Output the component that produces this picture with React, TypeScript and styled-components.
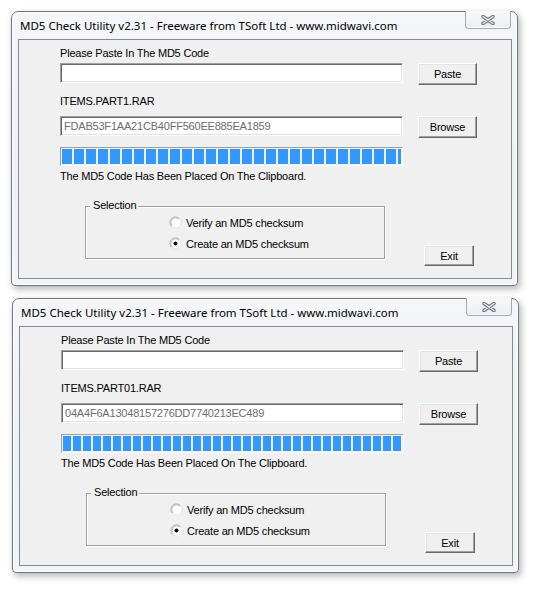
import React from "react";
import styled, { createGlobalStyle } from "styled-components";

const GlobalStyle = createGlobalStyle`
  html, body { margin: 0; padding: 0; background: #ffffff; }
  body { font-family: "Liberation Sans", Arial, sans-serif; }
  * { box-sizing: border-box; }
`;

const Page = styled.div`
  width: 536px;
  height: 595px;
  padding: 11px 0 0 11px;
  display: flex;
  flex-direction: column;
  align-items: flex-start;
  gap: 12px;
`;

const Frame = styled.div<{ $shift: number }>`
  width: 507px;
  height: 275px;
  margin-left: ${(p) => p.$shift}px;
  display: flex;
  flex-direction: column;
  border: 1px solid #70767c;
  border-radius: 7px 7px 4px 4px;
  background: linear-gradient(180deg, #f4f6f9 0%, #eef1f5 60%, #f2f5f8 100%);
  box-shadow: inset 0 0 0 1px rgba(255, 255, 255, 0.9), 2px 3px 7px rgba(0, 0, 0, 0.3);
  padding: 0 5px 6px 6px;
`;

const TitleBar = styled.div`
  height: 27px;
  display: flex;
  align-items: center;
  justify-content: space-between;
  flex-shrink: 0;
`;

const TitleText = styled.span`
  padding-left: 2px;
  font-family: "Noto Sans", "Open Sans", sans-serif;
  font-size: 11.5px;
  color: #000;
  white-space: nowrap;
`;

const CloseButton = styled.div`
  align-self: flex-start;
  margin-top: -1px;
  margin-right: 1px;
  width: 46px;
  height: 18px;
  border: 1px solid #a3a8ae;
  border-top: none;
  border-radius: 0 0 4px 4px;
  background: linear-gradient(180deg, #f7f8fa 0%, #eceef1 100%);
  box-shadow: inset 0 -1px 0 rgba(255, 255, 255, 0.8);
  display: flex;
  align-items: center;
  justify-content: center;
`;

const Client = styled.div`
  flex: 1;
  background: #f0f0f0;
  border: 1px solid #868b91;
  padding: 7px 0 0 41px;
  display: flex;
  flex-direction: column;
  align-items: flex-start;
  font-size: 11px;
  letter-spacing: -0.2px;
  color: #000;
`;

const Label = styled.div<{ $top: number }>`
  margin-top: ${(p) => p.$top}px;
  height: 13px;
  line-height: 13px;
  white-space: nowrap;
`;

const InputRow = styled.div<{ $top: number }>`
  margin-top: ${(p) => p.$top}px;
  display: grid;
  grid-template-columns: 343px 59px;
  column-gap: 15px;
  align-items: start;
`;

const Field = styled.div<{ $muted?: boolean }>`
  height: 20px;
  background: #fff;
  border: 1px solid;
  border-color: #a0a0a0 #ffffff #ffffff #a0a0a0;
  box-shadow: inset 1px 1px 0 #696969, inset -1px -1px 0 #e3e3e3;
  padding: 0 3px;
  line-height: 18px;
  color: ${(p) => (p.$muted ? "#6d6d6d" : "#000")};
  white-space: nowrap;
  overflow: hidden;
`;

const Button = styled.div<{ $w: number; $h: number }>`
  width: ${(p) => p.$w}px;
  height: ${(p) => p.$h}px;
  background: #f0f0f0;
  border: 1px solid;
  border-color: #ffffff #696969 #696969 #ffffff;
  box-shadow: inset -1px -1px 0 #a0a0a0, inset 1px 1px 0 #e3e3e3;
  display: flex;
  align-items: center;
  justify-content: center;
  font-size: 11px;
  color: #000;
`;

const Progress = styled.div`
  margin-top: 9px;
  width: 343px;
  height: 19px;
  border: 1px solid;
  border-color: #a0a0a0 #ffffff #ffffff #a0a0a0;
  padding: 1px;
  display: flex;
`;

const ProgressFill = styled.div<{ $block: number; $gap: number }>`
  flex: 1;
  background: repeating-linear-gradient(
    to right,
    #3399ff 0,
    #3399ff ${(p) => p.$block}px,
    transparent ${(p) => p.$block}px,
    transparent ${(p) => p.$block + p.$gap}px
  );
`;

const BottomRow = styled.div`
  margin-top: 23px;
  display: flex;
  align-items: flex-start;
`;

const GroupBox = styled.div`
  position: relative;
  margin-left: 25px;
  width: 300px;
  height: 53px;
  border: 1px solid #a0a0a0;
  box-shadow: inset 1px 1px 0 #ffffff, 1px 1px 0 #ffffff;
  padding: 5px 0 0 83px;
  display: flex;
  flex-direction: column;
`;

const Legend = styled.span`
  position: absolute;
  top: -8px;
  left: 4px;
  padding: 0 2px 0 3px;
  line-height: 13px;
  background: #f0f0f0;
`;

const RadioRow = styled.div`
  height: 21px;
  display: flex;
  align-items: center;
  gap: 4px;
  white-space: nowrap;
`;

const ExitWrap = styled.div`
  margin-left: 39px;
  margin-top: 39px;
`;

const Radio: React.FC<{ checked?: boolean }> = ({ checked }) => (
  <svg width="13" height="13" viewBox="0 0 13 13">
    <circle cx="6.5" cy="6.5" r="5.5" fill="#ffffff" />
    <path d="M2.6 10.4 A5.5 5.5 0 0 1 10.4 2.6" fill="none" stroke="#a0a0a0" strokeWidth="1" />
    <path d="M10.4 2.6 A5.5 5.5 0 0 1 2.6 10.4" fill="none" stroke="#e3e3e3" strokeWidth="1" />
    <path d="M3.3 9.7 A4.5 4.5 0 0 1 9.7 3.3" fill="none" stroke="#c4c4c4" strokeWidth="1" />
    {checked && <circle cx="6.5" cy="6.5" r="2" fill="#000" />}
  </svg>
);

const CloseGlyph = () => (
  <svg width="14" height="10" viewBox="0 0 14 10">
    <path d="M2 1.5 L12 8.5 M12 1.5 L2 8.5" stroke="#6b7580" strokeWidth="3.4" strokeLinecap="round" />
    <path d="M2 1.5 L12 8.5 M12 1.5 L2 8.5" stroke="#f4f6f8" strokeWidth="1.3" strokeLinecap="round" />
  </svg>
);

type WinData = {
  file: string;
  hash: string;
  shift: number;
  block: number;
  gap: number;
};

const windows: WinData[] = [
  { file: "ITEMS.PART1.RAR", hash: "FDAB53F1AA21CB40FF560EE885EA1859", shift: 0, block: 10, gap: 2 },
  { file: "ITEMS.PART01.RAR", hash: "04A4F6A13048157276DD7740213EC489", shift: 1, block: 8, gap: 2 },
];

const Md5Window: React.FC<{ data: WinData }> = ({ data }) => (
  <Frame $shift={data.shift}>
    <TitleBar>
      <TitleText>MD5 Check Utility v2.31 - Freeware from TSoft Ltd - www.midwavi.com</TitleText>
      <CloseButton>
        <CloseGlyph />
      </CloseButton>
    </TitleBar>
    <Client>
      <Label $top={0}>Please Paste In The MD5 Code</Label>
      <InputRow $top={3}>
        <Field />
        <Button $w={59} $h={22}>Paste</Button>
      </InputRow>
      <Label $top={10}>{data.file}</Label>
      <InputRow $top={8}>
        <Field $muted>{data.hash}</Field>
        <Button $w={59} $h={22}>Browse</Button>
      </InputRow>
      <Progress>
        <ProgressFill $block={data.block} $gap={data.gap} />
      </Progress>
      <Label $top={4}>The MD5 Code Has Been Placed On The Clipboard.</Label>
      <BottomRow>
        <GroupBox>
          <Legend>Selection</Legend>
          <RadioRow>
            <Radio />
            <span>Verify an MD5 checksum</span>
          </RadioRow>
          <RadioRow>
            <Radio checked />
            <span>Create an MD5 checksum</span>
          </RadioRow>
        </GroupBox>
        <ExitWrap>
          <Button $w={50} $h={21}>Exit</Button>
        </ExitWrap>
      </BottomRow>
    </Client>
  </Frame>
);

export default function App() {
  return (
    <>
      <GlobalStyle />
      <Page>
        {windows.map((w) => (
          <Md5Window key={w.file} data={w} />
        ))}
      </Page>
    </>
  );
}
